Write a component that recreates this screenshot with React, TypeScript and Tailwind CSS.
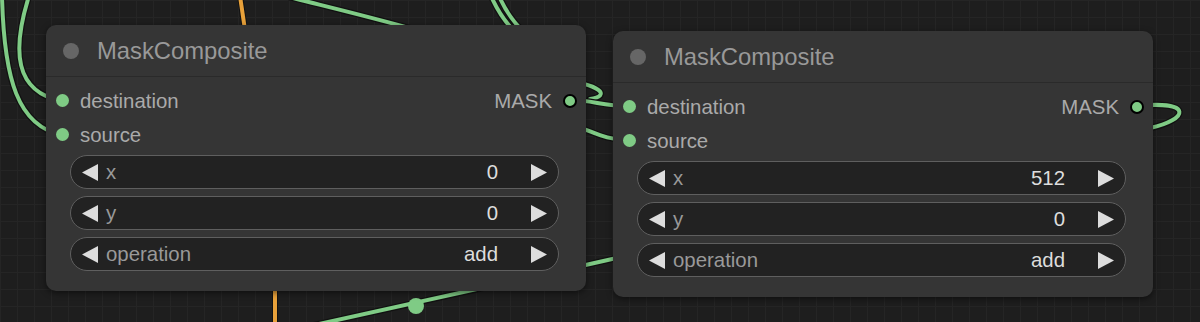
import React from "react";

type Widget = { label: string; value: string };

const font = { fontFamily: '"Liberation Sans", Arial, sans-serif' };

function Slot({ label, side }: { label: string; side: "in" | "out" }) {
  if (side === "out") {
    return (
      <div className="flex items-center gap-[11px]">
        <span className="text-[20.4px] text-[#aaaaaa]">{label}</span>
        <span className="block h-[14px] w-[14px] rounded-full border-2 border-black bg-[#7fcb85]" />
      </div>
    );
  }
  return (
    <div className="flex items-center gap-[11px]">
      <span className="block h-[13px] w-[13px] rounded-full bg-[#7fcb85]" />
      <span className="text-[20.4px] text-[#aaaaaa]">{label}</span>
    </div>
  );
}

function Arrow({ dir }: { dir: "l" | "r" }) {
  return (
    <svg width="16" height="17" viewBox="0 0 16 17" className="shrink-0">
      {dir === "l" ? <polygon points="16,0 16,17 0,8.5" fill="#dddddd" /> : <polygon points="0,0 0,17 16,8.5" fill="#dddddd" />}
    </svg>
  );
}

function WidgetRow({ w }: { w: Widget }) {
  return (
    <div className="flex h-[34px] items-center rounded-full border border-[#5f5f5f] bg-[#222222] pl-[11px] pr-[11px]">
      <Arrow dir="l" />
      <span className="ml-[8px] text-[20.4px] text-[#999999]">{w.label}</span>
      <span className="ml-auto mr-[33px] text-[20.4px] text-[#dddddd]">{w.value}</span>
      <Arrow dir="r" />
    </div>
  );
}

function Node({ left, top, widgets }: { left: number; top: number; widgets: Widget[] }) {
  return (
    <div
      className="absolute flex h-[266px] w-[540px] flex-col rounded-[10px] bg-[#353535] shadow-[0_2px_6px_rgba(0,0,0,0.5)]"
      style={{ left, top }}
    >
      <div className="flex h-[52px] items-center border-b border-[#2a2a2a] pl-[17px]">
        <span className="block h-[16px] w-[16px] rounded-full bg-[#666666]" />
        <span className="ml-[18px] text-[23.8px] text-[#999999]">MaskComposite</span>
      </div>
      <div className="flex flex-col pt-[7px]">
        <div className="flex h-[34px] items-center justify-between pl-[10px] pr-[9px]">
          <Slot label="destination" side="in" />
          <Slot label="MASK" side="out" />
        </div>
        <div className="flex h-[34px] items-center pl-[10px]">
          <Slot label="source" side="in" />
        </div>
      </div>
      <div className="mt-[3px] flex flex-col gap-[7px] pl-[24px] pr-[27px]">
        {widgets.map((w) => (
          <WidgetRow key={w.label} w={w} />
        ))}
      </div>
    </div>
  );
}

function Wire({ d, color = "#7fcb85" }: { d: string; color?: string }) {
  return (
    <>
      <path d={d} fill="none" stroke="#111" strokeWidth={6.5} strokeLinecap="round" />
      <path d={d} fill="none" stroke={color} strokeWidth={4} strokeLinecap="round" />
    </>
  );
}

export default function App() {
  return (
    <div
      className="relative h-[322px] w-[1200px] overflow-hidden bg-[#1e1e1e] bg-[linear-gradient(to_right,#252525_1px,transparent_1px),linear-gradient(to_bottom,#252525_1px,transparent_1px)] bg-[size:17px_17px]"
      style={font}
    >
      <svg className="absolute inset-0" width="1200" height="322">
        <Wire d="M 29 -4 C 12 50, 14 92, 62 101" />
        <Wire d="M 2 -4 C 4 80, 18 126, 62 135" />
        <Wire d="M 285 -4 C 380 20, 470 40, 520 70" />
        <Wire d="M 491 -4 C 498 12, 505 22, 515 32" />
        <Wire d="M 499 -4 C 506 12, 513 22, 524 32" />
        <Wire d="M 560 80 C 600 84, 612 96, 590 99" />
        <Wire d="M 569 100 C 595 100, 600 106, 628 106" />
        <Wire d="M 560 122 C 590 128, 600 140, 628 140" />
        <Wire d="M 1136 106 C 1195 100, 1188 120, 1150 128" />
        <Wire d="M 310 326 C 390 308, 520 280, 630 255" />
        <path d="M 240 -4 L 245 30" fill="none" stroke="#111" strokeWidth={6} />
        <path d="M 240 -4 L 245 30" fill="none" stroke="#e8a13a" strokeWidth={4} />
        <path d="M 275 285 L 275 326" fill="none" stroke="#111" strokeWidth={6} />
        <path d="M 275 285 L 275 326" fill="none" stroke="#e8a13a" strokeWidth={4} />
        <circle cx="416" cy="306" r="8" fill="#7fcb85" />
      </svg>
      <Node
        left={46}
        top={25}
        widgets={[
          { label: "x", value: "0" },
          { label: "y", value: "0" },
          { label: "operation", value: "add" },
        ]}
      />
      <Node
        left={613}
        top={31}
        widgets={[
          { label: "x", value: "512" },
          { label: "y", value: "0" },
          { label: "operation", value: "add" },
        ]}
      />
    </div>
  );
}
